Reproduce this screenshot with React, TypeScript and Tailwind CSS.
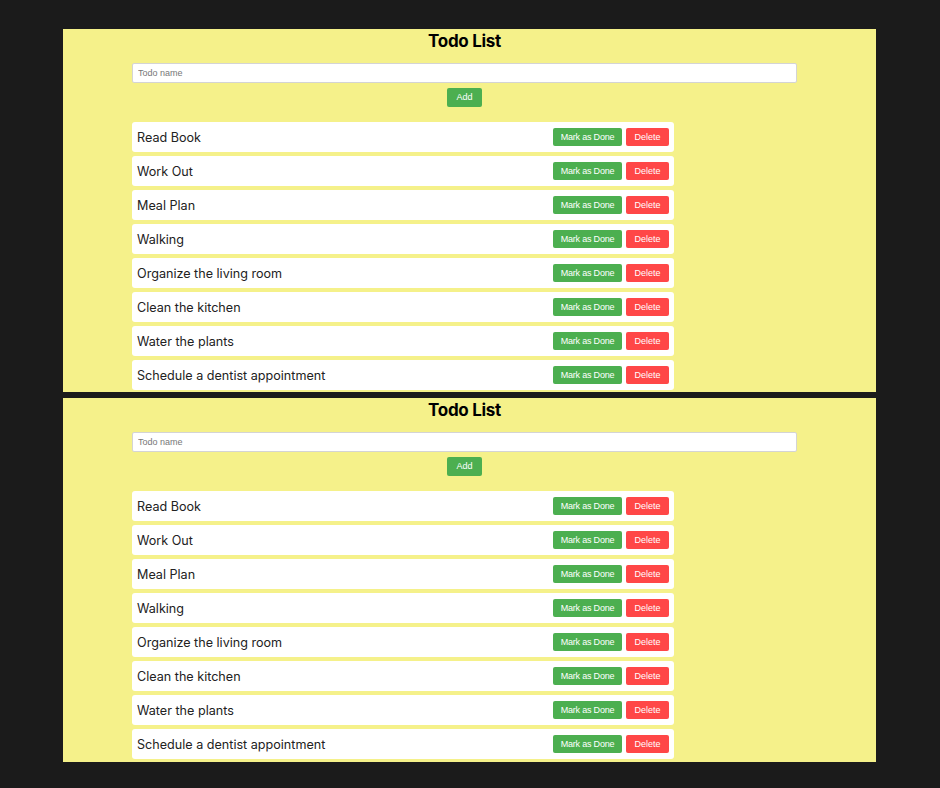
import React, { useState } from 'react';

const initialTodos = [
  'Read Book',
  'Work Out',
  'Meal Plan',
  'Walking',
  'Organize the living room',
  'Clean the kitchen',
  'Water the plants',
  'Schedule a dentist appointment',
];

function TodoPanel({ last }: { last?: boolean }) {
  const [todos] = useState(initialTodos);

  return (
    <div className={`bg-[#f5f18a] pl-[69px] pt-[1px] ${last ? 'pb-[3px]' : 'pb-[2px]'}`}>
      <div className="w-[665px] flex flex-col">
        <h1 className="text-center text-[17px] leading-[22px] font-bold text-black font-['Inter','Liberation_Sans',sans-serif] tracking-[-0.3px]">
          Todo List
        </h1>
        <input
          type="text"
          placeholder="Todo name"
          className="mt-[11px] h-[20px] w-full bg-white border border-[#d4d4d4] rounded-[2px] px-[5px] text-[9px] text-[#333] placeholder:text-[#777] font-['Liberation_Sans',Arial,sans-serif] outline-none"
        />
        <div className="flex justify-center mt-[5px]">
          <button className="h-[19px] w-[35px] bg-[#4caf50] text-white text-[9px] leading-[19px] rounded-[2px] font-['Liberation_Sans',Arial,sans-serif]">
            Add
          </button>
        </div>
        <ul className="mt-[15px] flex flex-col gap-[4px]">
          {todos.map((todo) => (
            <li
              key={todo}
              className="w-[542px] h-[30px] bg-white rounded-[3px] flex items-center justify-between pl-[5px] pr-[5px]"
            >
              <span className="pt-[2px] text-[12.6px] text-[#222] font-['Inter','Noto_Sans',sans-serif]">
                {todo}
              </span>
              <div className="flex gap-[4px]">
                <button className="h-[18px] w-[69px] bg-[#4caf50] text-white text-[9px] leading-[19px] rounded-[2px] font-['Liberation_Sans',Arial,sans-serif] tracking-[-0.2px]">
                  Mark as Done
                </button>
                <button className="h-[18px] w-[43px] bg-[#ff4747] text-white text-[9px] leading-[19px] rounded-[2px] font-['Liberation_Sans',Arial,sans-serif]">
                  Delete
                </button>
              </div>
            </li>
          ))}
        </ul>
      </div>
    </div>
  );
}

export default function App() {
  return (
    <div className="min-h-screen w-full bg-[#1b1b1b] pt-[29px] pl-[63px] pr-[64px] pb-[26px] flex flex-col gap-[6px]">
      <TodoPanel />
      <TodoPanel last />
    </div>
  );
}
